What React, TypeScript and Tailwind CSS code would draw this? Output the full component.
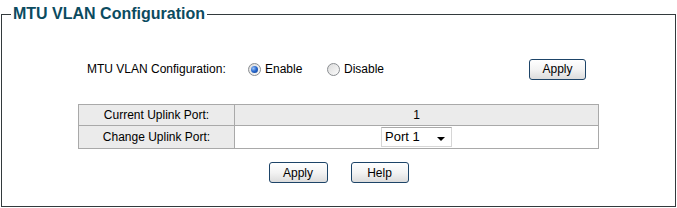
import type { ReactNode } from "react";

const FONT = { fontFamily: '"Liberation Sans", Arial, sans-serif' };

function Radio({ checked }: { checked?: boolean }) {
  return (
    <span className="relative inline-flex size-[13px] shrink-0 items-center justify-center rounded-full border border-[#8a8d91] bg-gradient-to-br from-[#dcdcdc] to-[#fbfbfb]">
      {checked && (
        <span className="size-[7px] rounded-full bg-[radial-gradient(circle_at_35%_35%,#9ec4f5_0%,#2a6ad0_45%,#0c3a8a_100%)]" />
      )}
    </span>
  );
}

function Btn({ children, w = "w-[58px]" }: { children: ReactNode; w?: string }) {
  return (
    <button
      type="button"
      className={`${w} h-[21px] rounded-[3px] border border-[#1d4468] bg-gradient-to-b from-white via-[#f3f3f3] to-[#dcdcdc] text-[12px] leading-none text-black`}
    >
      {children}
    </button>
  );
}

export default function App() {
  return (
    <div className="w-[677px] h-[208px] bg-white text-black" style={FONT}>
      <fieldset className="ml-px mt-[4px] h-[203px] w-[675px] border border-[#333a3d]">
        <legend className="ml-[9px] px-[2px] text-[16px] font-bold leading-[20px] text-[#0b4b5f]">
          MTU VLAN Configuration
        </legend>

        <div className="mt-[35px] flex h-[20px] items-center text-[12px]">
          <span className="w-[161px] pl-[85px] box-content shrink-0">MTU VLAN Configuration:</span>
          <label className="flex w-[79px] shrink-0 items-center gap-[4px]">
            <Radio checked />
            Enable
          </label>
          <label className="flex w-[202px] shrink-0 items-center gap-[4px]">
            <Radio />
            Disable
          </label>
          <Btn w="w-[57px]">Apply</Btn>
        </div>

        <table className="ml-[76px] mt-[25px] w-[521px] border-collapse text-[12px]">
          <tbody>
            <tr className="h-[21px] bg-[#ebebeb]">
              <td className="w-[156px] border border-[#a9a9a9] p-0 text-center">Current Uplink Port:</td>
              <td className="border border-[#a9a9a9] p-0 text-center">1</td>
            </tr>
            <tr className="h-[23px]">
              <td className="border border-[#a9a9a9] bg-[#ebebeb] p-0 text-center">Change Uplink Port:</td>
              <td className="border border-[#a9a9a9] bg-white p-0">
                <div className="flex justify-center">
                  <div className="relative flex h-[20px] w-[71px] items-center border border-[#d6d6d6] border-t-[#a9a9a9] bg-white pl-[3px] text-[13px]">
                    Port 1
                    <svg className="absolute right-[6px] top-[9px]" width="8" height="4" viewBox="0 0 8 4">
                      <path d="M0 0h8L4 4z" fill="#000" />
                    </svg>
                  </div>
                </div>
              </td>
            </tr>
          </tbody>
        </table>

        <div className="mt-[13px] flex justify-center gap-[23px]">
          <Btn w="w-[59px]">Apply</Btn>
          <Btn>Help</Btn>
        </div>
      </fieldset>
    </div>
  );
}
